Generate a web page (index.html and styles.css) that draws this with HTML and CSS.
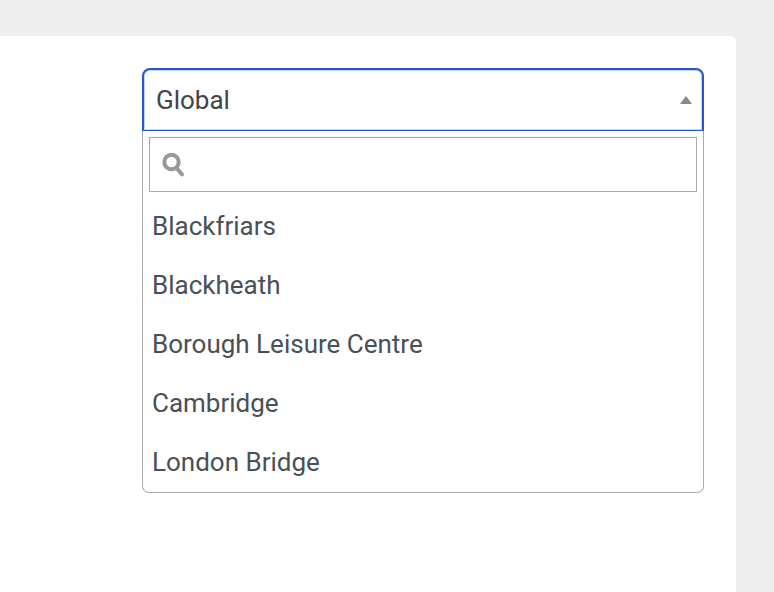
FILE: index.html
```html
<!DOCTYPE html>
<html lang="en">
<head>
    <meta charset="UTF-8">
    <meta name="viewport" content="width=device-width, initial-scale=1.0">
    <title>Location</title>
    <link rel="stylesheet" href="styles.css">
</head>
<body>
    <main class="panel">
        <div class="select">
            <button class="select-toggle" type="button" aria-haspopup="listbox" aria-expanded="true" aria-controls="locations">
                <span>Global</span>
                <svg class="arrow" viewBox="0 0 12 8" aria-hidden="true"><path d="M6 0L12 8H0z"/></svg>
            </button>
            <div class="dropdown">
                <label class="search">
                    <svg class="search-icon" viewBox="0 0 24 26" aria-hidden="true">
                        <circle cx="9.5" cy="10" r="7.2"/>
                        <path d="M14.5 16l5.5 6.5"/>
                    </svg>
                    <input class="search-input" type="text" aria-label="Search locations" autocomplete="off">
                </label>
                <ul class="options" id="locations" role="listbox">
                    <li class="option" role="option">Blackfriars</li>
                    <li class="option" role="option">Blackheath</li>
                    <li class="option" role="option">Borough Leisure Centre</li>
                    <li class="option" role="option">Cambridge</li>
                    <li class="option" role="option">London Bridge</li>
                </ul>
            </div>
        </div>
    </main>
</body>
</html>
```
FILE: styles.css
```css
* {
    margin: 0;
    padding: 0;
    box-sizing: border-box;
}

body {
    background: #eeeeee;
    min-height: 100vh;
    display: flex;
    padding: 36px 38px 0 0;
    font-family: Roboto, sans-serif;
    font-size: 26px;
    color: #495057;
}

.panel {
    flex: 1;
    display: flex;
    justify-content: flex-end;
    align-items: flex-start;
    padding: 32px 32px 32px 142px;
    background: #ffffff;
    border-radius: 0 5px 0 0;
}

.select {
    flex: 1;
}

.select-toggle {
    display: flex;
    align-items: center;
    justify-content: space-between;
    width: 100%;
    height: 63px;
    padding: 0 10px 0 12px;
    background: #ffffff;
    border: 2px solid #2459c9;
    border-bottom-width: 1px;
    border-radius: 8px 8px 0 0;
    box-shadow: inset 0 0 0 1px #c3d3f3;
    font: inherit;
    color: #444444;
    cursor: pointer;
}

.arrow {
    width: 12px;
    height: 8px;
    fill: #888888;
}

.dropdown {
    padding-top: 6px;
    border: 1px solid #aaaaaa;
    border-top: 0;
    border-radius: 0 0 7px 7px;
}

.search {
    display: flex;
    align-items: center;
    height: 55px;
    margin: 0 6px 5px;
    padding: 0 12px;
    border: 1px solid #aaaaaa;
    cursor: text;
}

.search-icon {
    width: 24px;
    height: 26px;
    fill: none;
    stroke: #999999;
    stroke-width: 4;
    stroke-linecap: round;
}

.search-input {
    flex: 1;
    min-width: 0;
    height: 100%;
    padding-left: 8px;
    border: 0;
    outline: 0;
    background: transparent;
    font: inherit;
    color: inherit;
}

.options {
    list-style: none;
}

.option {
    padding: 0 9px;
    line-height: 59px;
    cursor: pointer;
}
```
